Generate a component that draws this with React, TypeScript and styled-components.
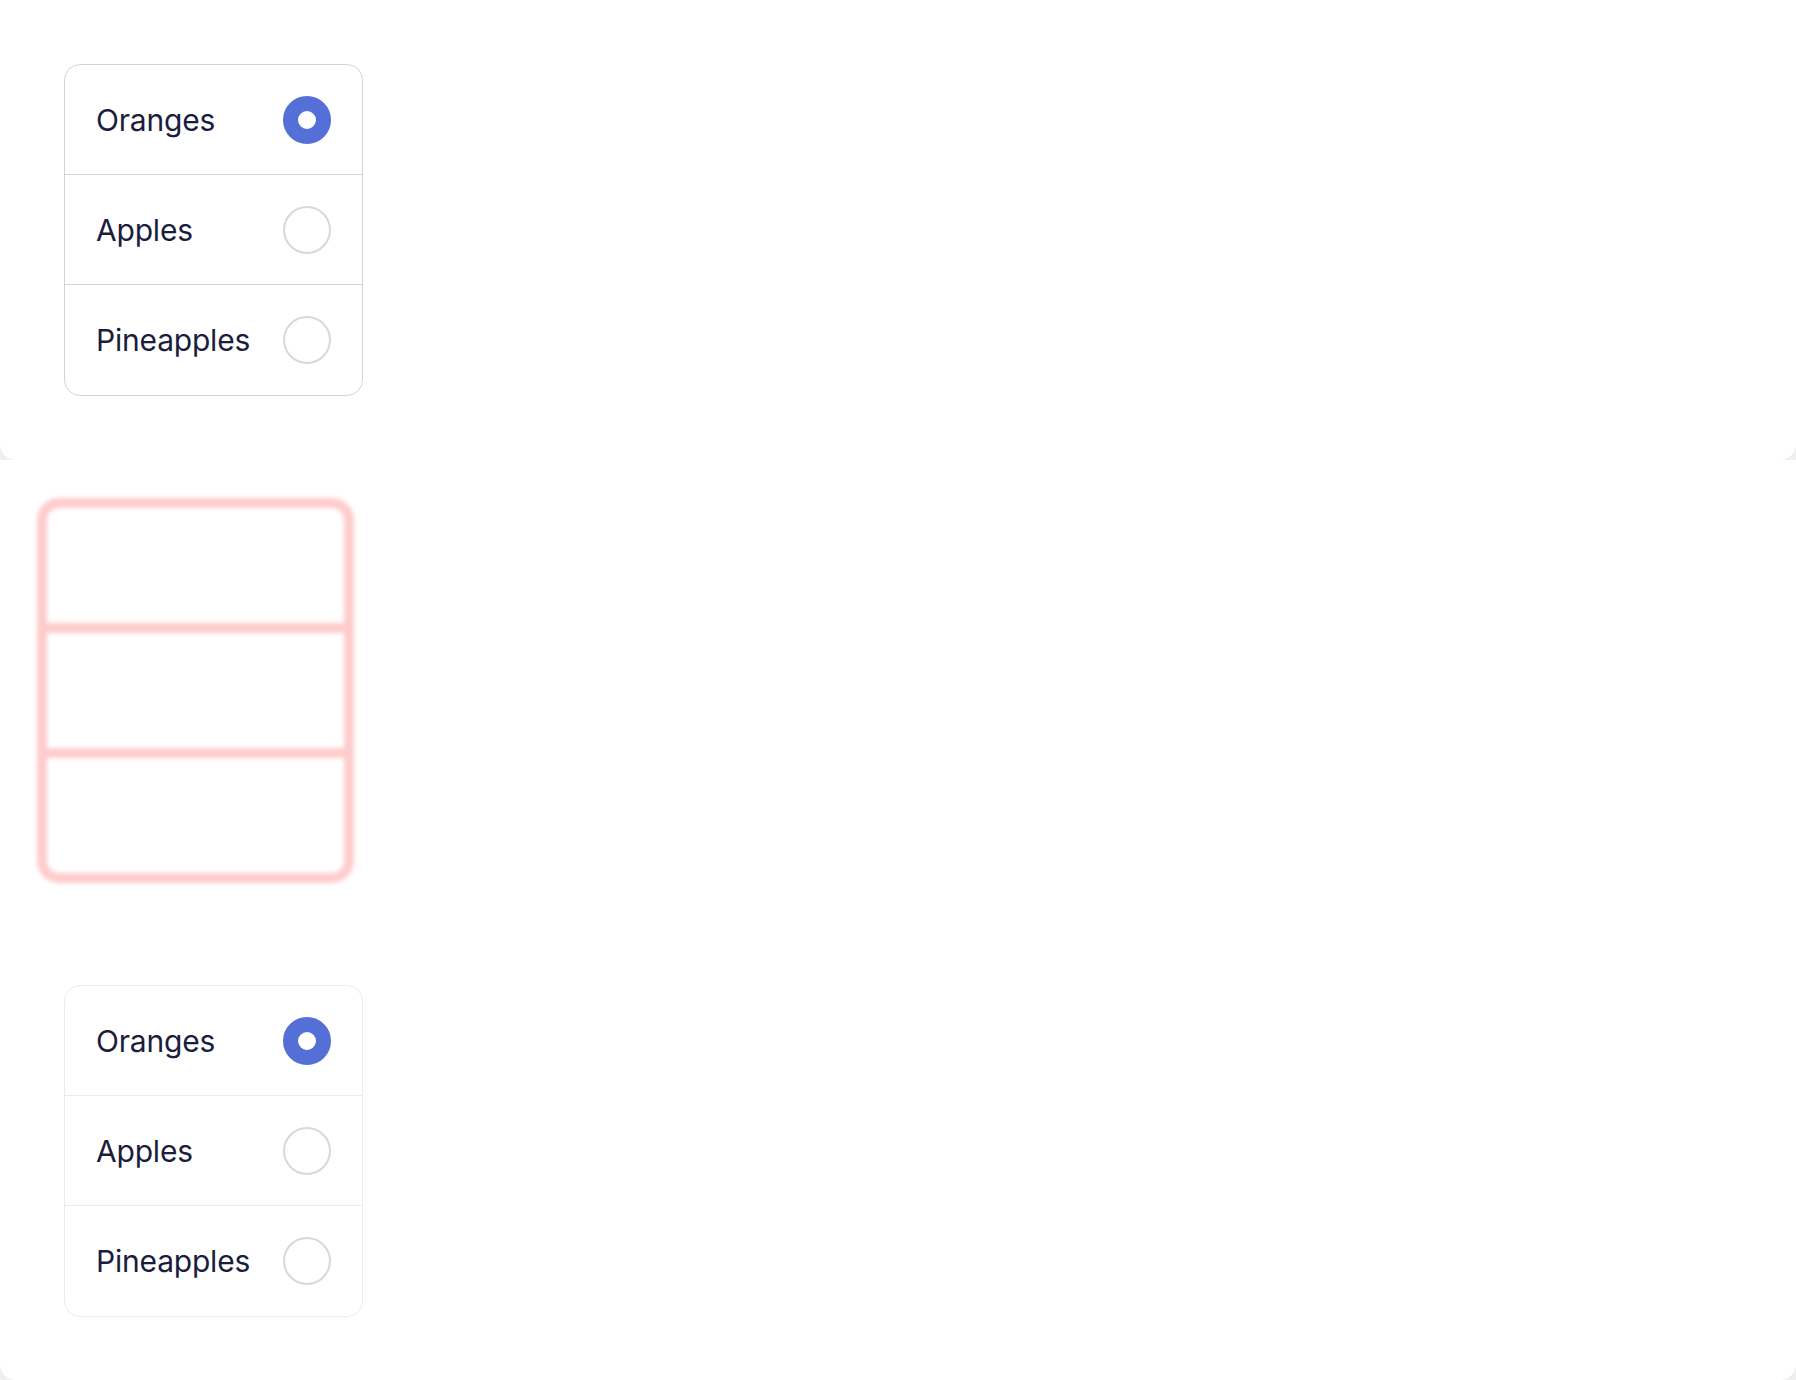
import React, { useState } from "react";
import styled, { createGlobalStyle } from "styled-components";

const GlobalStyle = createGlobalStyle`
  html, body {
    margin: 0;
    padding: 0;
    background: #efefef;
  }
  body {
    font-family: Inter, "Noto Sans", sans-serif;
  }
  * { box-sizing: border-box; }
`;

const Page = styled.div`
  display: flex;
  flex-direction: column;
  width: 1796px;
`;

const Panel = styled.section<{ $height: number }>`
  display: flex;
  flex-direction: column;
  align-items: flex-start;
  height: ${(p) => p.$height}px;
  background: #ffffff;
  border-radius: 0 0 16px 16px;
`;

const TopPanel = styled(Panel)`
  padding: 64px 0 0 64px;
`;

const BottomPanel = styled(Panel)`
  padding: 38px 0 0 37px;
`;

const Card = styled.div<{ $border: string }>`
  display: flex;
  flex-direction: column;
  width: 299px;
  border: 1px solid ${(p) => p.$border};
  border-radius: 16px;
  overflow: hidden;
  background: #fff;
`;

const Row = styled.label<{ $border: string }>`
  display: flex;
  align-items: center;
  justify-content: space-between;
  height: 110px;
  padding: 0 31px 0 31px;
  border-bottom: 1px solid ${(p) => p.$border};
  cursor: pointer;

  &:last-child {
    border-bottom: none;
  }
`;

const Label = styled.span`
  font-family: Inter, "Noto Sans", sans-serif;
  font-size: 30px;
  font-weight: 400;
  color: #1a1d3c;
  letter-spacing: -0.2px;
`;

const Radio = styled.span<{ $checked: boolean }>`
  display: block;
  width: 48px;
  height: 48px;
  border-radius: 50%;
  background: #fff;
  border: ${(p) => (p.$checked ? "15px solid #5470d6" : "2px solid #d8d8d8")};
`;

const LowerCardWrap = styled.div`
  margin: 102px 0 0 27px;
`;

const Skeleton = styled.div`
  display: flex;
  flex-direction: column;
  width: 317px;
  height: 385px;
  border: 10px solid #ffcccc;
  border-radius: 22px;
  filter: blur(2px);
`;

const SkeletonRow = styled.div`
  flex: 1;
  border-bottom: 10px solid #ffcccc;

  &:last-child {
    border-bottom: none;
  }
`;

const fruits = ["Oranges", "Apples", "Pineapples"];

function RadioCard({ border }: { border: string }) {
  const [value, setValue] = useState("Oranges");
  return (
    <Card $border={border} role="radiogroup">
      {fruits.map((f) => (
        <Row key={f} $border={border} onClick={() => setValue(f)}>
          <Label>{f}</Label>
          <Radio $checked={value === f} role="radio" aria-checked={value === f} />
        </Row>
      ))}
    </Card>
  );
}

export default function App() {
  return (
    <>
      <GlobalStyle />
      <Page>
        <TopPanel $height={460}>
          <RadioCard border="#d4d4d4" />
        </TopPanel>
        <BottomPanel $height={920}>
          <Skeleton>
            <SkeletonRow />
            <SkeletonRow />
            <SkeletonRow />
          </Skeleton>
          <LowerCardWrap>
            <RadioCard border="#ebebeb" />
          </LowerCardWrap>
        </BottomPanel>
      </Page>
    </>
  );
}
